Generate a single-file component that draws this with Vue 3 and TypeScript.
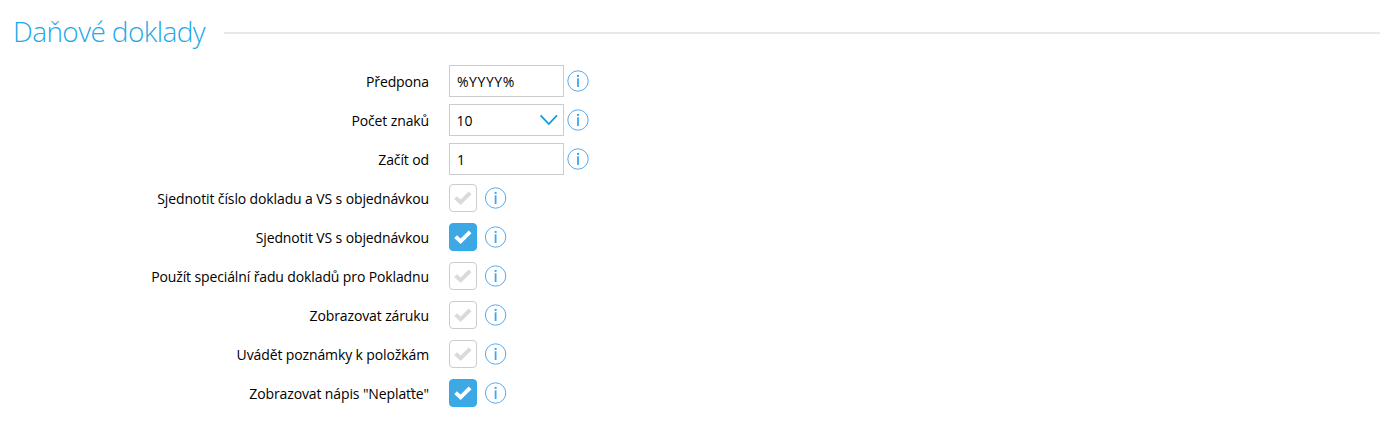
<script setup lang="ts">
import { reactive } from 'vue'

interface Field {
  id: string
  label: string
  kind: 'text' | 'select' | 'check'
  value: string
  checked: boolean
}

const check = (id: string, label: string, checked = false): Field => ({ id, label, kind: 'check', value: '', checked })

const fields = reactive<Field[]>([
  { id: 'prefix', label: 'Předpona', kind: 'text', value: '%YYYY%', checked: false },
  { id: 'length', label: 'Počet znaků', kind: 'select', value: '10', checked: false },
  { id: 'start', label: 'Začít od', kind: 'text', value: '1', checked: false },
  check('unify-number', 'Sjednotit číslo dokladu a VS s objednávkou'),
  check('unify-vs', 'Sjednotit VS s objednávkou', true),
  check('cash-series', 'Použít speciální řadu dokladů pro Pokladnu'),
  check('warranty', 'Zobrazovat záruku'),
  check('notes', 'Uvádět poznámky k položkám'),
  check('do-not-pay', 'Zobrazovat nápis "Neplaťte"', true),
])
</script>

<template>
  <section class="panel">
    <header class="heading">
      <h2>Daňové doklady</h2>
      <span class="rule"></span>
    </header>
    <form class="rows" @submit.prevent>
      <div v-for="field in fields" :key="field.id" class="row">
        <label class="label" :for="field.id">{{ field.label }}</label>
        <input v-if="field.kind === 'text'" :id="field.id" v-model="field.value" class="input text" type="text" />
        <div v-else-if="field.kind === 'select'" class="select">
          <select :id="field.id" v-model="field.value" class="input">
            <option>10</option>
          </select>
          <svg class="chevron" width="20" height="14" viewBox="0 0 20 14">
            <path d="M1.6 2.3 L9.8 11 L18 2.3" />
          </svg>
        </div>
        <button
          v-else
          :id="field.id"
          type="button"
          role="checkbox"
          :aria-checked="field.checked"
          class="check"
          :class="{ on: field.checked }"
          @click="field.checked = !field.checked"
        >
          <svg width="26" height="26" viewBox="0 0 26 26">
            <path d="M5.6 12.6 L10.6 17.3 L20.1 7.8" />
          </svg>
        </button>
        <svg
          class="info"
          :class="{ wide: field.kind === 'check' }"
          width="22"
          height="22"
          :viewBox="field.kind === 'check' ? '0.4 0 22 22' : '0 0 22 22'"
        >
          <circle cx="11" cy="11" r="10.2" />
          <path d="M11 8.3 V17" />
          <rect x="10" y="4.9" width="2" height="2" />
        </svg>
      </div>
    </form>
  </section>
</template>

<style>
body {
  background: #fff;
}
</style>

<style scoped>
.panel {
  box-sizing: border-box;
  height: 425px;
  padding: 13px 20px 0 13px;
  font-family: "Open Sans", "Noto Sans", sans-serif;
  font-size: 14px;
  color: #000;
}
.heading {
  display: flex;
  align-items: center;
  height: 40px;
}
h2 {
  flex: none;
  width: 211px;
  margin: 0;
  padding-bottom: 3px;
  font-size: 28px;
  line-height: 37px;
  font-weight: 300;
  letter-spacing: -0.6px;
  color: #1ca8ea;
  white-space: nowrap;
}
.rule {
  flex: 1;
  height: 2px;
  background: #e8e8e8;
}
.rows {
  display: grid;
  grid-auto-rows: 32px;
  row-gap: 7px;
  margin-top: 12px;
}
.row {
  display: flex;
  align-items: center;
}
.label {
  width: 416px;
  margin-right: 20px;
  padding-top: 2px;
  line-height: 20px;
  letter-spacing: -0.12px;
  text-align: right;
  white-space: nowrap;
}
.input {
  appearance: none;
  display: block;
  box-sizing: border-box;
  width: 115px;
  height: 32px;
  margin: 0;
  padding: 1px 7px;
  border: 1px solid #ccc;
  border-radius: 0;
  background: #fff;
  font: inherit;
  color: #000;
  outline: none;
}
.input.text {
  letter-spacing: 0.55px;
}
.select {
  position: relative;
}
.select .input {
  padding-left: 6.5px;
}
.chevron {
  position: absolute;
  top: 9px;
  right: 5px;
  pointer-events: none;
}
.chevron path {
  fill: none;
  stroke: #149bd7;
  stroke-width: 1.8;
}
.check {
  flex: none;
  box-sizing: border-box;
  width: 28px;
  height: 28px;
  padding: 0;
  border: 1px solid #ccc;
  border-radius: 4px;
  background: #fff;
}
.check svg {
  display: block;
}
.check path {
  fill: none;
  stroke: #dadada;
  stroke-width: 4;
}
.check.on {
  border-color: #2caeea;
  background: #3ea8e5;
}
.check.on path {
  stroke: #fff;
}
.info {
  flex: none;
  margin: -1px 0 0 3px;
}
.info.wide {
  margin-left: 8px;
}
.info circle,
.info path {
  fill: none;
  stroke: #3ea6ef;
}
.info circle {
  stroke: #58aaf0;
  stroke-width: 1;
}
.info path {
  stroke-width: 1.8;
}
.info rect {
  fill: #3ea6ef;
}
</style>
